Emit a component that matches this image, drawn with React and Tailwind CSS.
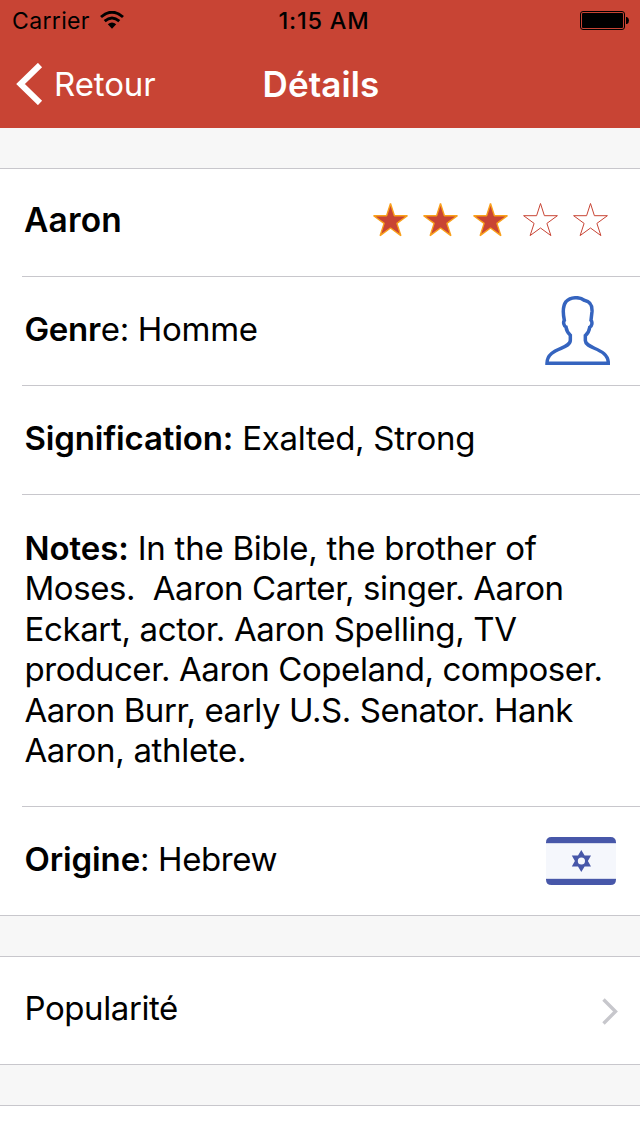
const STAR = "M17.5 1.5 L21.4 13.7 L34.4 13.7 L23.9 21.4 L27.9 33.6 L17.5 26 L7.1 33.6 L11.1 21.4 L0.6 13.7 L13.6 13.7 Z";

function Star({ filled }) {
  return (
    <svg className="h-[35px] w-[35px] overflow-visible" viewBox="0 0 35 35">
      <path d={STAR} fill={filled ? "#c84434" : "none"} stroke={filled ? "#f9a01b" : "#c84434"} strokeWidth={filled ? 1.4 : 1} strokeLinejoin={filled ? "bevel" : "miter"} />
    </svg>
  );
}

function Person() {
  return (
    <svg className="h-[69px] w-[65px]" viewBox="45 33 195 207">
      <path
        d="M51 235 C51 187 121 194 121 166 L121 151 C113 143 109 135 108 126 C101 123 99 111 103 106 C98 82 98 63 108 50 C121 36 149 34 163 46 C183 50 187 62 186 80 L183 106 C188 111 186 124 179 127 C178 136 174 145 166 152 L166 167 C167 193 235 188 235 235 Z"
        fill="none"
        stroke="#3564bf"
        strokeWidth="10.5"
      />
    </svg>
  );
}

function Flag() {
  return (
    <svg className="h-12 w-[70px]" viewBox="0 0 70 48">
      <path d="M0 6 H70 V42 H0 Z" fill="#f5f7fc" />
      <path d="M0 6.2 V5.5 Q0 0 5.5 0 H64.5 Q70 0 70 5.5 V6.2 Z M0 42 V42.500 Q0 48 5.500 48 H64.500 Q70 48 70 42.500 V42 Z" fill="#4757a9" />
      <path d="M0 6.5 H70 M0 41.500 H70" stroke="#d5daec" />
      <path d="M35.300 13 L38.600 18.400 H45 L41.900 24 L45 29.600 H38.600 L35.300 35 L32 29.600 H25.800 L28.900 24 L25.800 18.400 H32 Z" fill="#4757a9" />
      <circle cx="35.400" cy="24" r="3.600" fill="#f5f7fc" />
    </svg>
  );
}

const NOTES = [
  { text: "Moses.\u00a0 Aaron Carter, singer. Aaron", cls: "tracking-[-0.42px]" },
  { text: "Eckart, actor. Aaron Spelling, TV", cls: "tracking-[-0.34px]" },
  { text: "producer. Aaron Copeland, composer.", cls: "tracking-[-0.42px]" },
  { text: "Aaron Burr, early U.S. Senator. Hank", cls: "tracking-[-0.41px]" },
  { text: "Aaron, athlete.", cls: "tracking-[-0.32px]" },
];

export default function App() {
  return (
    <div className="h-[1136px] w-[640px] overflow-hidden bg-[#f7f7f7] font-['Inter',sans-serif] text-[33px] leading-10 whitespace-pre text-black">
      <header className="h-32 bg-[#c84434]">
        <div className="grid h-10 grid-cols-3 items-center text-[23px] leading-7">
          <div className="flex items-center gap-[10px] pl-3">
            <span className="pt-0.5 tracking-[0.35px]">Carrier</span>
            <svg className="h-[18px] w-6" viewBox="0 0 24 18">
              <path d="M1 6 Q12 -3.600 23 6 M4.700 10.200 Q12 3.800 19.300 10.200" fill="none" stroke="black" strokeWidth="2.900" />
              <path d="M7.800 13.300 Q12 9.800 16.200 13.300 L12 17.700 Z" />
            </svg>
          </div>
          <span className="justify-self-center pt-0.5 pl-2 text-[23.5px] font-medium tracking-[0.8px]">1:15 AM</span>
          <svg className="mr-[11px] h-[19px] w-[49px] justify-self-end" viewBox="0 0 49 19">
            <rect x="0.500" y="0.500" width="44" height="18" rx="2.500" fill="none" stroke="black" />
            <rect x="2" y="2" width="41" height="15" rx="1" />
            <path d="M46 6 H47 Q49 7 49 9.500 Q49 12 47 13 H46 Z" />
          </svg>
        </div>
        <div className="grid h-[88px] grid-cols-3 items-center text-white">
          <div className="flex items-center gap-[11px] pl-4">
            <svg className="h-[42px] w-[27px]" viewBox="0 0 27 42">
              <path d="M24 2 L4.500 21 L24 40" fill="none" stroke="white" strokeWidth="6" />
            </svg>
            <span className="tracking-[-0.1px]">Retour</span>
          </div>
          <h1 className="justify-self-center pb-px pl-0.5 text-[35px] font-semibold tracking-[0.1px]">Détails</h1>
        </div>
      </header>

      <section className="mt-10 border-y border-[#c8c7cc] bg-white">
        <div className="ml-[22px] flex h-[108px] items-start justify-between border-b border-[#c8c7cc] pt-[31px] pr-[32.5px] pl-0.5">
          <span className="text-[33.5px] font-semibold tracking-[0.2px]">Aaron</span>
          <div className="flex gap-[15px] pt-0.5">
            {[1, 2, 3, 4, 5].map((n) => (
              <Star key={n} filled={n <= 3} />
            ))}
          </div>
        </div>
        <div className="ml-[22px] flex h-[109px] items-start justify-between border-b border-[#c8c7cc] pt-[19px] pr-[30px] pl-[2.4px]">
          <p className="pt-[13px] tracking-[-0.3px]"><b className="font-semibold">Genr</b>e: Homme</p>
          <Person />
        </div>
        <div className="ml-[22px] h-[109px] border-b border-[#c8c7cc] pt-8 pl-[2.4px]">
          <p className="tracking-[-0.26px]"><b className="font-semibold tracking-[-0.15px]">Signification:</b> Exalted, Strong</p>
        </div>
        <div className="ml-[22px] h-[312px] border-b border-[#c8c7cc] pt-[33px] pl-[2.4px] leading-[40.4px]">
          <p className="tracking-[-0.26px]"><b className="font-semibold tracking-[-0.05px]">Notes:</b> In the Bible, the brother of</p>
          {NOTES.map((line) => (
            <p key={line.text} className={line.cls}>{line.text}</p>
          ))}
        </div>
        <div className="ml-[22px] flex h-[108px] items-start justify-between pt-[30px] pr-6 pl-[2.4px]">
          <p className="pt-[2px] tracking-[-0.42px]"><b className="font-semibold tracking-[-0.1px]">Origine</b>: Hebrew</p>
          <Flag />
        </div>
      </section>

      <section className="mt-10 flex h-[109px] items-start justify-between border-y border-[#c8c7cc] bg-white pt-[31px] pr-[22px] pl-[24.4px]">
        <span className="tracking-[-0.4px]">Popularité</span>
        <svg className="mt-[10px] h-[27px] w-4" viewBox="0 0 16 27">
          <path d="M1.500 1.500 L13.500 13.500 L1.500 25.500" fill="none" stroke="#c7c7cc" strokeWidth="3.400" />
        </svg>
      </section>
      <section className="mt-10 h-[31px] border-t border-[#c8c7cc] bg-white" />
    </div>
  );
}
